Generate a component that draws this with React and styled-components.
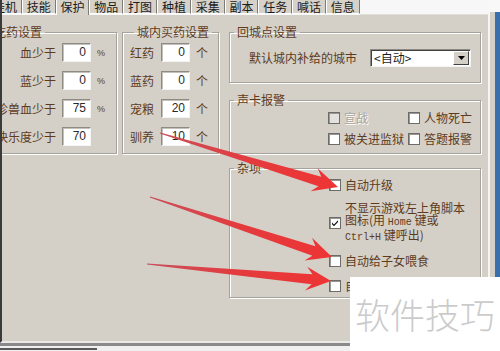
import React from "react";
import styled, { createGlobalStyle } from "styled-components";

const GlobalStyle = createGlobalStyle`
    html, body {
        margin: 0;
        padding: 0;
    }
    body {
        width: 500px;
        height: 351px;
        overflow: hidden;
        background: #f2f2f2;
        font-family: "Noto Sans CJK SC", sans-serif;
        font-size: 12px;
    }
`

const Screen = styled.div`
    position: relative;
    width: 500px;
    height: 351px;
    overflow: hidden;
    display: flex;
    flex-direction: column;
    background: #f4f4f4;
`

const Main = styled.div`
    display: flex;
    height: 343px;
`

const Window = styled.div`
    width: 488px;
    display: flex;
    flex-direction: column;
    border-left: 2px solid #3a3a3a;
    border-bottom: 2px solid #ebe9e5;
    box-sizing: border-box;
`

const Edge = styled.div`
    flex: 1;
    display: flex;
    flex-direction: column;
    background: #f8f8f8;

    &::after {
        content: "";
        flex: 1;
        margin-top: 12px;
        background: linear-gradient(to right, #f6f5f2 0 2px, #d4d0c8 2px 7px, #3a6fae 7px);
    }
`

const TabBar = styled.div`
    height: 15px;
    display: flex;
    overflow: hidden;
    background: #f7f7f7;
`

const TabStrip = styled.div`
    display: flex;
    margin-left: -14px;
    flex: 1;
`

const Tab = styled.div`
    flex: 0 0 33.8px;
    box-sizing: border-box;
    height: ${props => props.active ? '15px' : '14px'};
    padding-bottom: ${props => props.active ? '2px' : '0'};
    border-left: 1px solid #ffffff;
    border-right: 1px solid #7d7b76;
    border-bottom: ${props => props.active ? '0' : '1px solid #ffffff'};
    background: #d6d2ca;
    color: #1c1c1c;
    font-size: 12px;
    line-height: 12px;
    text-align: center;
    display: flex;
    align-items: center;
    justify-content: center;
    white-space: nowrap;
`

const TabFill = styled.div`
    flex: 1;
    height: 14px;
    border-bottom: 1px solid #e2dfda;
`

const Page = styled.div`
    flex: 1;
    background: #d4d0c8;
    overflow: hidden;
`

const Content = styled.div`
    display: flex;
    align-items: flex-start;
    margin-left: -16px;
    padding-top: 9px;
`

const LeftGroups = styled.div`
    display: flex;
    gap: 5px;
    margin-right: 10px;
`

const RightColumn = styled.div`
    display: flex;
    flex-direction: column;
    width: 252px;
`

const Group = styled.fieldset`
    box-sizing: border-box;
    margin: 0;
    margin-top: ${props => props.top || 0}px;
    padding: ${props => props.pad || '0'};
    min-width: 0;
    width: ${props => props.w ? props.w + 'px' : 'auto'};
    height: ${props => props.h}px;
    border: 1px solid #a6a39c;
    box-shadow: 1px 1px 0 #ffffff, inset 1px 1px 0 #ffffff;
`

const Legend = styled.legend`
    margin-left: 4px;
    padding: 0 3px;
    line-height: 16px;
    font-size: 12px;
    color: #5e3b1d;
`

const Rows = styled.div`
    display: flex;
    flex-direction: column;
    gap: 9px;
`

const Row = styled.div`
    display: flex;
    align-items: center;
    height: 19px;
`

const Label = styled.span`
    width: ${props => props.w}px;
    text-align: ${props => props.right ? 'right' : 'left'};
    color: #5e3b1d;
    font-size: 12px;
    line-height: 14px;
    white-space: nowrap;
    margin-right: ${props => props.gap}px;
`

const Field = styled.div`
    box-sizing: border-box;
    width: 29px;
    height: 19px;
    background: #ffffff;
    border: 1px solid;
    border-color: #8d8a84 #f4f4f4 #f4f4f4 #8d8a84;
    box-shadow: inset 1px 1px 0 #c4c1ba;
    padding-right: 4px;
    text-align: right;
    font-family: "Liberation Sans", Arial, sans-serif;
    font-size: 12px;
    line-height: 17px;
    color: #2a2a2a;
`

const Unit = styled.span`
    margin-left: 6px;
    color: #5e3b1d;
    font-size: ${props => props.small ? '9px' : '12px'};
    font-family: ${props => props.small ? '"Liberation Sans", sans-serif' : 'inherit'};
`

const CityRow = styled.div`
    display: flex;
    align-items: center;
    height: 18px;
    padding: 9px 9px 0 19px;
`

const Combo = styled.div`
    margin-left: auto;
    box-sizing: border-box;
    width: 101px;
    height: 18px;
    display: flex;
    align-items: center;
    background: #ffffff;
    border: 1px solid;
    border-color: #8d8a84 #f4f4f4 #f4f4f4 #8d8a84;
    box-shadow: inset 1px 1px 0 #404040;
    padding: 0 1px 0 3px;
    color: #1c1c1c;
    font-size: 12px;
`

const ComboText = styled.span`
    flex: 1;
    line-height: 14px;
`

const DropButton = styled.div`
    width: 16px;
    height: 14px;
    box-sizing: border-box;
    background: #d4d0c8;
    border: 1px solid;
    border-color: #ffffff #404040 #404040 #ffffff;
    display: flex;
    align-items: center;
    justify-content: center;
`

const AlarmGrid = styled.div`
    display: grid;
    grid-template-columns: 80px auto;
    row-gap: 5px;
    padding: 2px 0 0 98px;
`

const MiscList = styled.div`
    display: flex;
    flex-direction: column;
    gap: 9px;
    padding: 1px 0 0 99px;
`

const Check = styled.div`
    display: flex;
    align-items: center;
    gap: 4px;
    min-height: 16px;
    color: ${props => props.disabled ? '#aaa69e' : '#5e3b1d'};
    text-shadow: ${props => props.disabled ? '1px 1px 0 #ffffff' : 'none'};
    font-size: 12px;
    line-height: 12px;
    white-space: nowrap;
`

const Box = styled.span`
    flex: 0 0 auto;
    box-sizing: border-box;
    width: 12px;
    height: 12px;
    background: ${props => props.disabled ? '#e4e2de' : '#ffffff'};
    border: 1px solid #6e6c68;
    box-shadow: inset 1px 1px 0 #9a9791;
    display: flex;
    align-items: center;
    justify-content: center;
`

const Mono = styled.span`
    font-family: "Liberation Mono", monospace;
    font-size: 10px;
`

const Footer = styled.div`
    height: 8px;
    box-sizing: border-box;
    border-top: 3px solid #8a8a8a;
    background: #f0f0f0;
    padding-top: 2px;

    &::after {
        content: "";
        display: block;
        width: 97px;
        height: 2px;
        background: #5a5a5a;
    }
`

const Arrows = styled.svg`
    position: absolute;
    left: 0;
    top: 0;
    pointer-events: none;
`

const Watermark = styled.div`
    position: absolute;
    left: 350px;
    top: 277px;
    right: 0;
    bottom: 0;
    background: #ffffff;
    display: flex;
    align-items: center;
    justify-content: center;
    padding-bottom: 2px;
    color: #cbcbcb;
    font-size: 35px;
    font-weight: 300;
    letter-spacing: 0;
`

const tabs = ['挂机', '技能', '保护', '物品', '打图', '种植', '采集', '副本', '任务', '喊话', '信息']

const potionRows = [
    { label: '血少于', value: '0', unit: '%' },
    { label: '蓝少于', value: '0', unit: '%' },
    { label: '珍兽血少于', value: '75', unit: '%' },
    { label: '快乐度少于', value: '70' },
]

const buyRows = [
    { label: '红药', value: '0' },
    { label: '蓝药', value: '0' },
    { label: '宠粮', value: '20' },
    { label: '驯养', value: '10' },
]

// tapered arrow polygon, thin at the tail and widening toward the head
const arrow = (x0, y0, x1, y1, head = 25, hw = 12, sw = 5) => {
    const dx = x1 - x0
    const dy = y1 - y0
    const len = Math.hypot(dx, dy)
    const ux = dx / len
    const uy = dy / len
    const nx = -uy
    const ny = ux
    const bx = x1 - ux * head
    const by = y1 - uy * head
    const sx = x1 - ux * (head - 6)
    const sy = y1 - uy * (head - 6)
    const pts = [
        [x0 + nx * 0.6, y0 + ny * 0.6],
        [sx + nx * sw, sy + ny * sw],
        [bx + nx * hw, by + ny * hw],
        [x1, y1],
        [bx - nx * hw, by - ny * hw],
        [sx - nx * sw, sy - ny * sw],
        [x0 - nx * 0.6, y0 - ny * 0.6],
    ]
    return pts.map(p => p.map(v => v.toFixed(1)).join(',')).join(' ')
}

const Tick = () => (
    <svg width="8" height="8" viewBox="0 0 8 8">
        <path d="M1 3.5 L3 5.6 L7 1.2 L7 3 L3 7.2 L1 5.2 Z" fill="#111" />
    </svg>
)

const CheckItem = ({ checked, disabled, children }) => (
    <Check disabled={disabled}>
        <Box disabled={disabled}>{checked && <Tick />}</Box>
        <span>{children}</span>
    </Check>
)

const App = () => (
    <Screen>
        <GlobalStyle />
        <Main>
            <Window>
                <TabBar>
                    <TabStrip>
                        {tabs.map(t => (
                            <Tab key={t} active={t === '保护'}>{t}</Tab>
                        ))}
                        <TabFill />
                    </TabStrip>
                </TabBar>
                <Page>
                    <Content>
                        <LeftGroups>
                            <Group w={131} h={130} pad="3px 0 0 0">
                                <Legend>吃药设置</Legend>
                                <Rows>
                                    {potionRows.map(r => (
                                        <Row key={r.label}>
                                            <Label w={69} right gap={6}>{r.label}</Label>
                                            <Field>{r.value}</Field>
                                            {r.unit && <Unit small>{r.unit}</Unit>}
                                        </Row>
                                    ))}
                                </Rows>
                            </Group>
                            <Group w={97} h={130} pad="3px 0 0 7px">
                                <Legend>城内买药设置</Legend>
                                <Rows>
                                    {buyRows.map(r => (
                                        <Row key={r.label}>
                                            <Label w={24} gap={7}>{r.label}</Label>
                                            <Field>{r.value}</Field>
                                            <Unit>个</Unit>
                                        </Row>
                                    ))}
                                </Rows>
                            </Group>
                        </LeftGroups>
                        <RightColumn>
                            <Group h={59}>
                                <Legend>回城点设置</Legend>
                                <CityRow>
                                    <Label w={108} gap={0}>默认城内补给的城市</Label>
                                    <Combo>
                                        <ComboText>&lt;自动&gt;</ComboText>
                                        <DropButton>
                                            <svg width="7" height="4" viewBox="0 0 7 4">
                                                <path d="M0 0 H7 L3.5 4 Z" fill="#000" />
                                            </svg>
                                        </DropButton>
                                    </Combo>
                                </CityRow>
                            </Group>
                            <Group h={62} top={9}>
                                <Legend>声卡报警</Legend>
                                <AlarmGrid>
                                    <CheckItem disabled>宣战</CheckItem>
                                    <CheckItem>人物死亡</CheckItem>
                                    <CheckItem>被关进监狱</CheckItem>
                                    <CheckItem>答题报警</CheckItem>
                                </AlarmGrid>
                            </Group>
                            <Group h={138} top={6}>
                                <Legend>杂项</Legend>
                                <MiscList>
                                    <CheckItem>自动升级</CheckItem>
                                    <CheckItem checked>
                                        不显示游戏左上角脚本<br />
                                        图标(用 <Mono>Home</Mono> 键或<br />
                                        <Mono>Ctrl+H</Mono> 键呼出)
                                    </CheckItem>
                                    <CheckItem>自动给子女喂食</CheckItem>
                                    <CheckItem>自动后跳</CheckItem>
                                </MiscList>
                            </Group>
                        </RightColumn>
                    </Content>
                </Page>
            </Window>
            <Edge />
        </Main>
        <Footer />
        <Arrows width="500" height="351" viewBox="0 0 500 351">
            <defs>
                <linearGradient id="arrowFill" x1="0" y1="0" x2="1" y2="0">
                    <stop offset="0" stopColor="#c9505a" />
                    <stop offset="0.5" stopColor="#e43b3e" />
                    <stop offset="1" stopColor="#ee3434" />
                </linearGradient>
            </defs>
            <polygon points={arrow(160, 133, 338, 187)} fill="url(#arrowFill)" />
            <polygon points={arrow(150, 197, 332, 257)} fill="url(#arrowFill)" />
            <polygon points={arrow(147, 264, 331, 281)} fill="url(#arrowFill)" />
        </Arrows>
        <Watermark>软件技巧</Watermark>
    </Screen>
)

export default App;
